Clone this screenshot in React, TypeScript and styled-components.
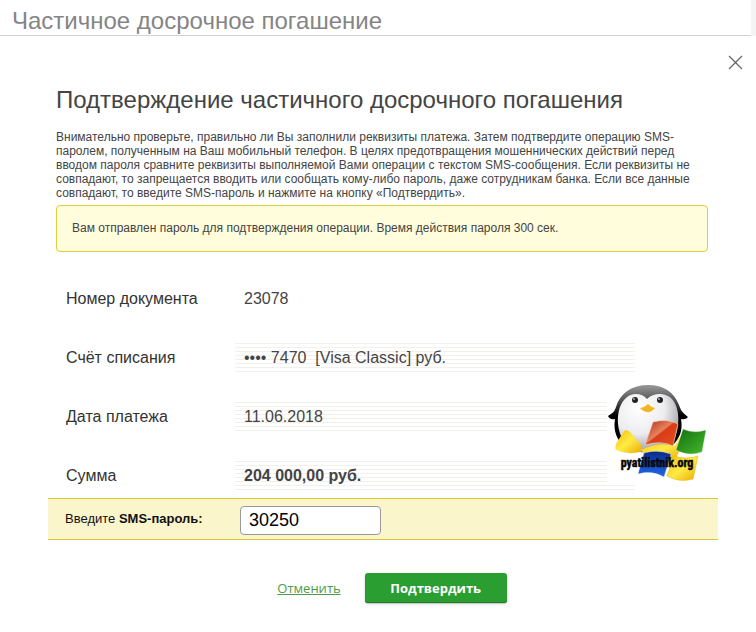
import React from "react";
import styled, { createGlobalStyle } from "styled-components";

const GlobalStyle = createGlobalStyle`
  * { box-sizing: border-box; }
  body {
    margin: 0;
    background: #fff;
    color: #444;
    font-family: "Liberation Sans", Arial, sans-serif;
  }
`;

const PageHeader = styled.header`
  height: 36px;
  padding: 8px 12px 0;
  border-right: 5px solid #f4f4f4;
  box-shadow: inset 0 -1px 0 #d2d2d2;
`;

const PageTitle = styled.h1`
  margin: 0;
  font-size: 24px;
  line-height: 26px;
  font-weight: 400;
  color: #858585;
  white-space: nowrap;
`;

const Dialog = styled.main`
  display: flex;
  flex-direction: column;
  padding: 18px 0 24px;
`;

const CloseButton = styled.button`
  display: flex;
  align-self: flex-end;
  margin-right: 12px;
  padding: 0;
  border: 0;
  background: none;
  color: #666;
  cursor: pointer;
`;

const Intro = styled.section`
  margin: 15px 48px 0 56px;
`;

const Heading = styled.h2`
  margin: 0 0 16px;
  font-size: 24px;
  line-height: 28px;
  font-weight: 400;
  color: #444;
`;

const Warning = styled.p`
  margin: 0;
  padding-right: 12px;
  font-size: 12px;
  line-height: 14px;
`;

const Notice = styled.div`
  margin-top: 5px;
  padding: 14px 15px 15px;
  border: 1px solid #e0cf3a;
  border-radius: 4px;
  background: #fffddc;
  font-size: 12px;
  line-height: 16px;
`;

const Details = styled.dl`
  position: relative;
  display: grid;
  gap: 30px;
  margin: 32px 38px 8px 66px;
`;

const Row = styled.div`
  display: grid;
  grid-template-columns: 169px minmax(0, 400px);
`;

const Label = styled.dt`
  font-size: 16px;
  line-height: 30px;
  height: 29px;
  color: #333;
`;

const Value = styled.dd<{ $striped?: boolean; $bold?: boolean }>`
  margin: 0;
  padding-left: 9px;
  height: 29px;
  font-size: 16px;
  line-height: 29px;
  font-weight: ${(p) => (p.$bold ? 700 : 400)};
  white-space: pre;
  background: ${(p) =>
    p.$striped
      ? "repeating-linear-gradient(#f2f0eb 0 1px, #fff 1px 4px)"
      : "none"};
`;

const Mascot = styled.svg`
  position: absolute;
  top: 100px;
  left: 541px;
  width: 100px;
  height: 100px;
`;

const PasswordBar = styled.div`
  display: grid;
  grid-template-columns: 175px 141px;
  align-items: center;
  height: 42px;
  margin: 0 38px 0 48px;
  padding-left: 17px;
  border: solid #e0c832;
  border-width: 1px 0;
  background: #fbf5cb;
`;

const PasswordLabel = styled.label`
  font-size: 13px;
  line-height: 16px;
  color: #111;
`;

const PasswordInput = styled.input`
  width: 100%;
  height: 29px;
  margin-top: 3px;
  padding: 0 8px;
  border: 1px solid #999;
  border-radius: 4px;
  background: #fff;
  font-family: inherit;
  font-size: 18px;
  color: #000;
`;

const Actions = styled.div`
  display: flex;
  align-items: center;
  justify-content: center;
  gap: 24px;
  margin-top: 33px;
  padding-left: 28px;
`;

const CancelLink = styled.a`
  font-family: "Open Sans", "Noto Sans", sans-serif;
  font-size: 13px;
  line-height: 20px;
  color: #4c9c4a;
  text-decoration: underline;
`;

const ConfirmButton = styled.button`
  width: 142px;
  height: 30px;
  padding: 0;
  border: 0;
  border-radius: 3px;
  background: #2a9e31;
  box-shadow: inset 0 -1px 0 #1d7d24, 0 1px 2px #bbb;
  font-family: "Open Sans", "Noto Sans", sans-serif;
  font-size: 13px;
  font-weight: 700;
  color: #fff;
  cursor: pointer;
`;

function PenguinMascot() {
  return (
    <Mascot viewBox="0 0 100 100" role="img" aria-label="pyatilistnik.org">
      <defs>
        <linearGradient id="back" x2="0" y2="1">
          <stop offset="0" stopColor="#999" />
          <stop offset=".25" stopColor="#555" />
          <stop offset=".5" stopColor="#000" />
        </linearGradient>
        <radialGradient id="belly" cx=".35" cy=".25" r=".85">
          <stop offset="0" stopColor="#fff" />
          <stop offset=".5" stopColor="#ededf0" />
          <stop offset="1" stopColor="#85858d" />
        </radialGradient>
        <linearGradient id="red" x2="1" y2="1">
          <stop offset="0" stopColor="#a92d17" />
          <stop offset=".45" stopColor="#e8805c" />
          <stop offset=".5" stopColor="#d63c16" />
          <stop offset="1" stopColor="#e95420" />
        </linearGradient>
        <linearGradient id="green" x2="1" y2="1">
          <stop offset="0" stopColor="#126d12" />
          <stop offset="1" stopColor="#45ba2c" />
        </linearGradient>
        <linearGradient id="blue" x2="0" y2="1">
          <stop offset="0" stopColor="#0a2a8c" />
          <stop offset="1" stopColor="#2269e8" />
        </linearGradient>
        <linearGradient id="yellow" x2="1" y2="1">
          <stop offset="0" stopColor="#f3bd08" />
          <stop offset=".5" stopColor="#ffeb45" />
          <stop offset="1" stopColor="#e9aa00" />
        </linearGradient>
      </defs>
      <rect width="100" height="100" fill="#fff" />
      <path d="M41 1C25 1 13 9 9 23C7 29 4 30 1 32Q3 36 8 35C6 47 10 56 17 62L65 62C73 54 76 46 74 35Q79 36 81 33C76 29 74 27 72 21C67 8 57 1 41 1Z" fill="url(#back)" />
      <path d="M40 15C35 9 25 8 19 14C9 23 9 42 15 54C20 65 31 69 42 69C54 69 64 64 68 54C73 40 73 23 64 14C57 8 46 9 40 15Z" fill="url(#belly)" />
      <circle cx="28" cy="16" r="3" fill="#222" />
      <circle cx="53" cy="16" r="3" fill="#222" />
      <circle cx="27" cy="15" r="1" fill="#aaa" />
      <circle cx="52" cy="15" r="1" fill="#aaa" />
      <path d="M33 24Q38 23 41 20Q44 23 48 24Q44 29 40 28Q37 28 33 24Z" fill="#f5b522" />
      <path d="M17 47Q20 45 23 48L35 62Q36 66 33 68Q20 71 9 66Q8 64 9 60Z" fill="url(#yellow)" />
      <path d="M34 66Q52 57 68 62L72 54L76 60L68 76L42 73Z" fill="url(#yellow)" />
      <path d="M46 38Q60 34 71 40L66 62Q54 56 38 61Z" fill="url(#red)" stroke="#f5d7c3" strokeWidth=".6" />
      <path d="M76 45Q87 50 99 46L95 68Q82 73 69 66Z" fill="url(#green)" stroke="#e1efda" strokeWidth=".4" />
      <path d="M37 69Q50 65 64 70L57 93Q45 86 31 90Z" fill="url(#blue)" stroke="#dde6f8" strokeWidth=".4" />
      <path d="M67 72Q79 76 91 72L86 95Q73 99 60 92Z" fill="url(#yellow)" stroke="#e7bb20" strokeWidth=".6" />
      <text x="50" y="83" textAnchor="middle" fontFamily="Liberation Sans Narrow, Roboto Condensed, sans-serif" fontSize="12" fontWeight="700" fill="#080808" stroke="#080808" strokeWidth=".5">
        pyatilistnik.org
      </text>
    </Mascot>
  );
}

const details = [
  { label: "Номер документа", value: "23078" },
  { label: "Счёт списания", value: "•••• 7470  [Visa Classic] руб.", striped: true },
  { label: "Дата платежа", value: "11.06.2018", striped: true },
  { label: "Сумма", value: "204 000,00 руб.", striped: true, bold: true },
];

export default function App() {
  return (
    <>
      <GlobalStyle />
      <PageHeader>
        <PageTitle>Частичное досрочное погашение</PageTitle>
      </PageHeader>
      <Dialog>
        <CloseButton type="button" aria-label="Закрыть">
          <svg width="17" height="17" viewBox="0 0 17 17" fill="none" stroke="currentColor" strokeWidth="1.3">
            <path d="M2 2L15 15M15 2L2 15" />
          </svg>
        </CloseButton>
        <Intro>
          <Heading>Подтверждение частичного досрочного погашения</Heading>
          <Warning>
            Внимательно проверьте, правильно ли Вы заполнили реквизиты платежа. Затем подтвердите операцию SMS-паролем,
            полученным на Ваш мобильный телефон. В целях предотвращения мошеннических действий перед вводом пароля
            сравните реквизиты выполняемой Вами операции с текстом SMS-сообщения. Если реквизиты не совпадают, то
            запрещается вводить или сообщать кому-либо пароль, даже сотрудникам банка. Если все данные совпадают, то
            введите SMS-пароль и нажмите на кнопку «Подтвердить».
          </Warning>
          <Notice role="status">
            Вам отправлен пароль для подтверждения операции. Время действия пароля 300 сек.
          </Notice>
        </Intro>
        <Details>
          {details.map((d) => (
            <Row key={d.label}>
              <Label>{d.label}</Label>
              <Value $striped={d.striped} $bold={d.bold}>{d.value}</Value>
            </Row>
          ))}
          <PenguinMascot />
        </Details>
        <PasswordBar>
          <PasswordLabel htmlFor="sms-password">
            Введите <b>SMS-пароль:</b>
          </PasswordLabel>
          <PasswordInput id="sms-password" type="text" defaultValue="30250" />
        </PasswordBar>
        <Actions>
          <CancelLink href="#cancel">Отменить</CancelLink>
          <ConfirmButton type="button">Подтвердить</ConfirmButton>
        </Actions>
      </Dialog>
    </>
  );
}
